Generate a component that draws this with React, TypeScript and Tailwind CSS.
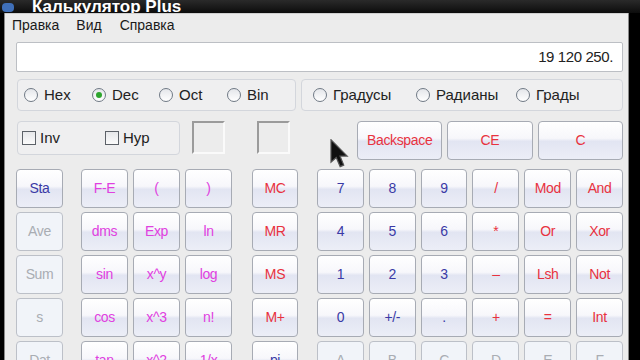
import React from 'react';

type Tone = 'blue' | 'pink' | 'red' | 'off';

const toneClass: Record<Tone, string> = {
    blue: 'text-[#3a3aa6]',
    pink: 'text-[#e040e0]',
    red: 'text-[#e8323f]',
    off: 'text-[#a9adb3]',
};

const rows: [string, Tone][][] = [
    [['Sta', 'blue'], ['F-E', 'pink'], ['(', 'pink'], [')', 'pink'], ['MC', 'red'], ['7', 'blue'], ['8', 'blue'], ['9', 'blue'], ['/', 'red'], ['Mod', 'red'], ['And', 'red']],
    [['Ave', 'off'], ['dms', 'pink'], ['Exp', 'pink'], ['ln', 'pink'], ['MR', 'red'], ['4', 'blue'], ['5', 'blue'], ['6', 'blue'], ['*', 'red'], ['Or', 'red'], ['Xor', 'red']],
    [['Sum', 'off'], ['sin', 'pink'], ['x^y', 'pink'], ['log', 'pink'], ['MS', 'red'], ['1', 'blue'], ['2', 'blue'], ['3', 'blue'], ['–', 'red'], ['Lsh', 'red'], ['Not', 'red']],
    [['s', 'off'], ['cos', 'pink'], ['x^3', 'pink'], ['n!', 'pink'], ['M+', 'red'], ['0', 'blue'], ['+/-', 'blue'], ['.', 'blue'], ['+', 'red'], ['=', 'red'], ['Int', 'red']],
    [['Dat', 'off'], ['tan', 'pink'], ['x^2', 'pink'], ['1/x', 'pink'], ['pi', 'blue'], ['A', 'off'], ['B', 'off'], ['C', 'off'], ['D', 'off'], ['E', 'off'], ['F', 'off']],
];

const Key: React.FC<{ label: string; tone: Tone; className?: string }> = ({ label, tone, className = '' }) => (
    <button
        type="button"
        className={`h-[39px] flex items-center justify-center rounded-[4px] border text-[14px] tracking-tight ${tone === 'off'
            ? 'border-[#bcc0c8] bg-[#f1f4f9]'
            : 'border-[#a7abb4] bg-[linear-gradient(to_bottom,#ffffff_0%,#f7f7fb_44%,#e2e5f2_52%,#eceef7_100%)]'
            } ${toneClass[tone]} ${className}`}
    >
        {label}
    </button>
);

const Radio: React.FC<{ label: string; checked?: boolean; className?: string }> = ({ label, checked, className = '' }) => (
    <div className={`flex items-center gap-[6px] ${className}`}>
        <span className="w-[14px] h-[14px] rounded-full border border-[#707985] bg-[linear-gradient(to_bottom,#e4e6ea,#ffffff)] flex items-center justify-center">
            {checked && <span className="w-[6px] h-[6px] rounded-full bg-[#2ea52e]" />}
        </span>
        <span className="text-[15px] text-[#222]">{label}</span>
    </div>
);

const Check: React.FC<{ label: string; className?: string }> = ({ label, className = '' }) => (
    <div className={`flex items-center gap-[4px] ${className}`}>
        <span className="w-[14px] h-[14px] border border-[#5c6168] bg-[linear-gradient(to_bottom,#e6e7ea,#fbfbfb)]" />
        <span className="text-[15px] text-[#222]">{label}</span>
    </div>
);

export default function App() {
    return (
        <div className="relative w-[640px] h-[360px] overflow-hidden bg-black flex flex-col font-['Liberation_Sans',Arial,sans-serif]">
            {/* title bar */}
            <div className="h-[13px] shrink-0 flex items-end overflow-hidden bg-[linear-gradient(to_bottom,#2a2a2a,#0c0c0c)]">
                <div className="w-[12px] h-[9px] ml-[2px] mb-[1px] shrink-0 bg-[#3f6fb8] rounded-sm" />
                <span className="ml-[18px] h-[13px] leading-[13px] text-white font-bold text-[17px] whitespace-nowrap">Калькулятор Plus</span>
            </div>

            <div className="flex flex-1 min-h-0">
                <div className="w-[4px] bg-black" />
                <div className="w-[1px] bg-[#8a8a8a]" />
                <div className="flex-1 bg-[#ececec] flex flex-col pl-[11px] pr-[5px] border-t border-[#cfcfcf]">
                    {/* menu */}
                    <div className="h-[22px] shrink-0 -ml-[4px] flex items-center text-[14px] text-[#1a1a1a]">
                        <span>Правка</span>
                        <span className="ml-[17px]">Вид</span>
                        <span className="ml-[18px]">Справка</span>
                    </div>

                    {/* display */}
                    <div className="mt-[6px] h-[30px] shrink-0 border border-[#bcbfc4] rounded-[2px] bg-white flex items-center justify-end pr-[9px] text-[15px] tracking-[-0.4px] text-[#222]">
                        19 120 250.
                    </div>

                    {/* base / angle groups */}
                    <div className="mt-[7px] h-[32px] shrink-0 flex gap-[5px]">
                        <div className="w-[279px] ml-[1px] rounded-[4px] border border-[#d3d6dc] bg-[#efeff0] flex items-center pl-[6px]">
                            <Radio label="Hex" className="w-[68px]" />
                            <Radio label="Dec" checked className="w-[67px]" />
                            <Radio label="Oct" className="w-[68px]" />
                            <Radio label="Bin" />
                        </div>
                        <div className="flex-1 rounded-[4px] border border-[#d3d6dc] bg-[#efeff0] flex items-center pl-[11px]">
                            <Radio label="Градусы" className="w-[103px]" />
                            <Radio label="Радианы" className="w-[100px]" />
                            <Radio label="Грады" />
                        </div>
                    </div>

                    {/* inv/hyp + clear row */}
                    <div className="mt-[10px] h-[38px] shrink-0 flex items-start">
                        <div className="w-[163px] h-[34px] ml-[1px] rounded-[4px] border border-[#d3d6dc] bg-[#efeff0] flex items-center pl-[4px]">
                            <Check label="Inv" className="w-[83px]" />
                            <Check label="Hyp" />
                        </div>
                        <div className="ml-[12px] w-[33px] h-[33px] border-2 border-t-[#9b9b9b] border-l-[#9b9b9b] border-b-[#fafafa] border-r-[#fafafa]" />
                        <div className="ml-[32px] w-[33px] h-[33px] border-2 border-t-[#9b9b9b] border-l-[#9b9b9b] border-b-[#fafafa] border-r-[#fafafa]" />
                        <div className="ml-[67px] flex-1 grid grid-cols-3 gap-[5px]">
                            <Key label="Backspace" tone="red" className="h-[38px]" />
                            <Key label="CE" tone="red" className="h-[38px]" />
                            <Key label="C" tone="red" className="h-[38px]" />
                        </div>
                    </div>

                    {/* main keys */}
                    <div className="mt-[10px] shrink-0 flex flex-col gap-[4px]">
                        {rows.map((row, r) => (
                            <div key={r} className="flex shrink-0">
                                <Key label={row[0][0]} tone={row[0][1]} className="w-[47px]" />
                                <div className="ml-[18px] grid grid-cols-3 gap-[5px] w-[151px]">
                                    {row.slice(1, 4).map(([l, t]) => (
                                        <Key key={l} label={l} tone={t} />
                                    ))}
                                </div>
                                <Key label={row[4][0]} tone={row[4][1]} className="ml-[20px] w-[46px]" />
                                <div className="ml-[19px] flex-1 grid grid-cols-6 gap-[5px]">
                                    {row.slice(5).map(([l, t]) => (
                                        <Key key={l} label={l} tone={t} />
                                    ))}
                                </div>
                            </div>
                        ))}
                    </div>
                </div>
                <div className="w-[1px] bg-[#8a8a8a]" />
                <div className="w-[11px] bg-black" />
            </div>

            {/* mouse pointer */}
            <svg className="absolute left-[330px] top-[139px]" width="20" height="30" viewBox="0 0 13 20">
                <path d="M0.5 0.5 L0.5 15.5 L4 12.3 L6.6 18.4 L9 17.4 L6.5 11.4 L11.3 11.4 Z" fill="#111" stroke="#555" strokeWidth="0.8" />
            </svg>
        </div>
    );
}
